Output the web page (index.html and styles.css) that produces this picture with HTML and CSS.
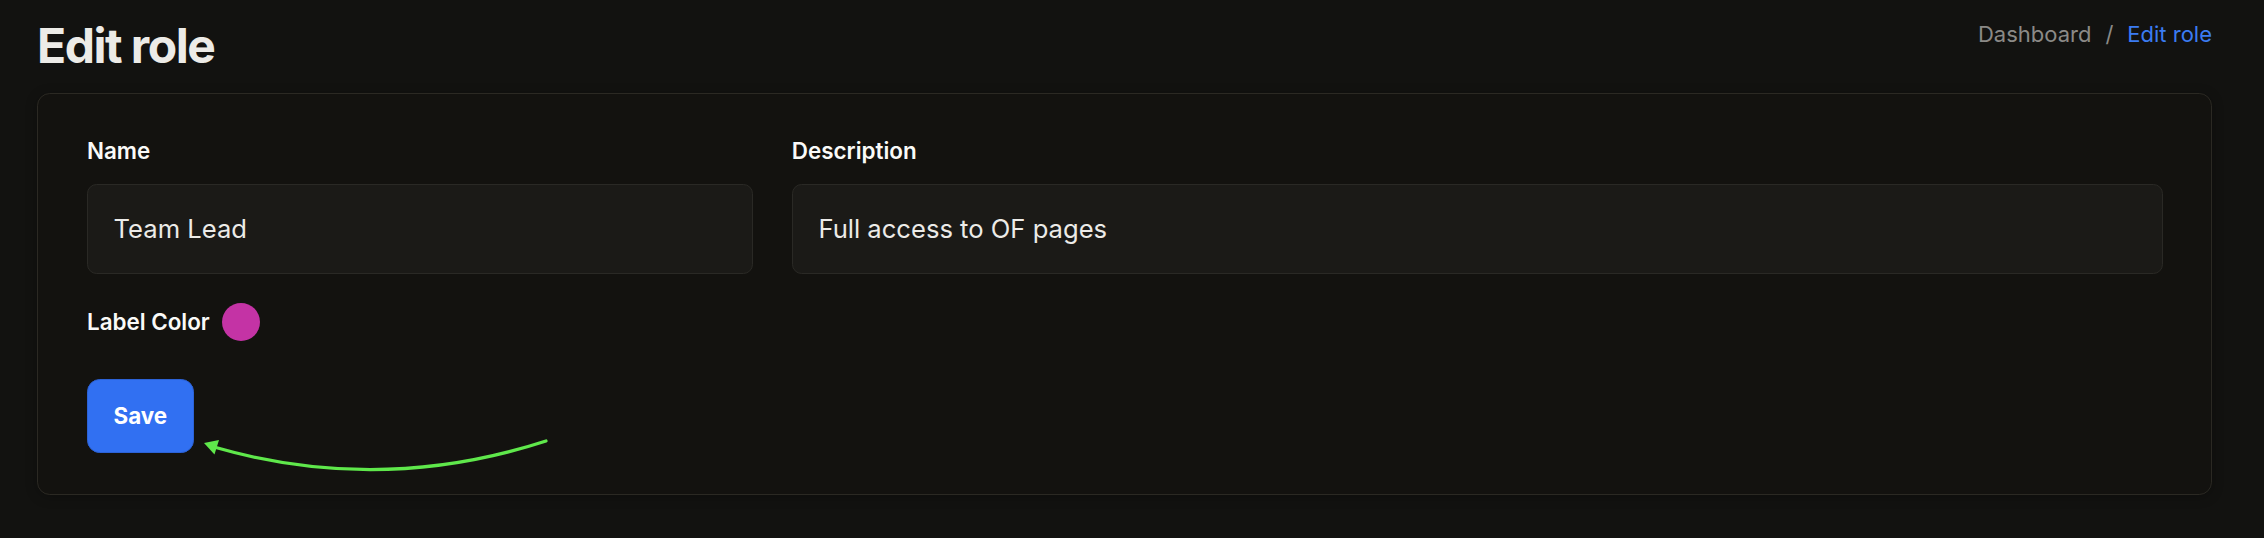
FILE: index.html
```html
<!DOCTYPE html>
<html lang="en">
<head>
<meta charset="utf-8">
<title>Edit role</title>
<link rel="stylesheet" href="styles.css">
</head>
<body>
<div class="page">
  <header class="page-header">
    <h1 class="page-title">Edit role</h1>
    <nav class="breadcrumb">
      <span class="crumb">Dashboard</span>
      <span class="sep">/</span>
      <span class="crumb current">Edit role</span>
    </nav>
  </header>

  <section class="card">
    <div class="form-grid">
      <div class="field">
        <label class="label">Name</label>
        <div class="input">Team Lead</div>
      </div>
      <div class="field span-2">
        <label class="label">Description</label>
        <div class="input">Full access to OF pages</div>
      </div>
    </div>

    <div class="color-row">
      <span class="label inline">Label Color</span>
      <span class="swatch"></span>
    </div>

    <button class="btn-save">Save</button>
  </section>
</div>

<svg class="annotation" width="2264" height="538" viewBox="0 0 2264 538" xmlns="http://www.w3.org/2000/svg">
  <path d="M 546 441 Q 380 495 214 447" fill="none" stroke="#5fe84b" stroke-width="3.2" stroke-linecap="round"/>
  <polygon points="204,443 219,440 214.5,454.5" fill="#5fe84b"/>
</svg>
</body>
</html>
```

FILE: styles.css
```css
* { box-sizing: border-box; }

html, body {
  margin: 0;
  padding: 0;
}

body {
  background: #121210;
  font-family: Inter, "Noto Sans", "Liberation Sans", sans-serif;
  color: #ededeb;
  width: 2264px;
  height: 538px;
  overflow: hidden;
  position: relative;
}

.page {
  padding: 17px 52px 0 37px;
}

.page-header {
  display: flex;
  justify-content: space-between;
  align-items: flex-start;
  height: 76px;
}

.page-title {
  margin: 0;
  font-size: 48px;
  line-height: 58px;
  font-weight: 700;
  letter-spacing: -1.5px;
  color: #ecebe7;
}

.breadcrumb {
  display: flex;
  align-items: center;
  gap: 14px;
  font-size: 22px;
  line-height: 33px;
  padding-top: 1px;
}

.crumb { color: #8b8a87; }
.sep { color: #8b8a87; }
.crumb.current { color: #3b7cf2; }

.card {
  background: #13120f;
  border: 1px solid #2b2923;
  border-radius: 12.8px;
  padding: 40px 48px 40.6px 49px;
  box-shadow: 0 2px 12px rgba(0,0,0,0.25);
}

.form-grid {
  display: grid;
  grid-template-columns: repeat(3, 1fr);
  column-gap: 38.4px;
}

.span-2 { grid-column: span 2; }

.field {
  display: flex;
  flex-direction: column;
}

.label {
  font-size: 22.4px;
  line-height: 33.6px;
  font-weight: 600;
  color: #fafaf8;
  margin-bottom: 16px;
}

.label.inline { margin-bottom: 0; }

.input {
  height: 90.7px;
  background: #1b1a17;
  border: 1px solid #2a2925;
  border-radius: 9.6px;
  padding: 0 25.6px;
  display: flex;
  align-items: center;
  font-size: 25.6px;
  color: #ecebe8;
}

.color-row {
  display: flex;
  align-items: center;
  gap: 12px;
  margin-top: 28.7px;
  height: 38.4px;
}

.swatch {
  width: 38.4px;
  height: 38.4px;
  border-radius: 50%;
  background: #c433a5;
}

.btn-save {
  display: block;
  margin-top: 37.3px;
  width: 106.7px;
  height: 74.4px;
  background: #3170f2;
  border: 1.6px solid #2c62d6;
  border-radius: 12.8px;
  color: #ffffff;
  font-family: inherit;
  font-size: 22.4px;
  font-weight: 700;
  padding: 0;
}

.annotation {
  position: absolute;
  top: 0;
  left: 0;
  pointer-events: none;
}
```
